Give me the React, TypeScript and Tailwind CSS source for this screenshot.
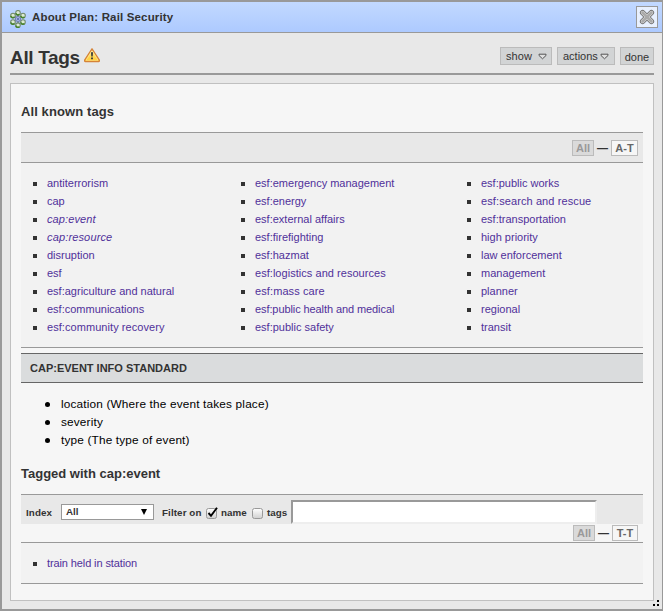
const columns = [
  {
    width: 'w-[208px]',
    tags: ['antiterrorism', 'cap', 'cap:event', 'cap:resource', 'disruption', 'esf', 'esf:agriculture and natural', 'esf:communications', 'esf:community recovery'],
  },
  {
    width: 'w-[226px]',
    tags: ['esf:emergency management', 'esf:energy', 'esf:external affairs', 'esf:firefighting', 'esf:hazmat', 'esf:logistics and resources', 'esf:mass care', 'esf:public health and medical', 'esf:public safety'],
  },
  {
    width: 'w-[160px]',
    tags: ['esf:public works', 'esf:search and rescue', 'esf:transportation', 'high priority', 'law enforcement', 'management', 'planner', 'regional', 'transit'],
  },
];

const infoItems = ['location (Where the event takes place)', 'severity', 'type (The type of event)'];

const tracking: Record<string, string> = {
  'cap:event': 'italic tracking-[0.1px]',
  'cap:resource': 'italic tracking-[0.15px]',
  'esf:community recovery': 'tracking-[0.06px]',
  'esf:public health and medical': 'tracking-[-0.09px]',
  'esf:logistics and resources': 'tracking-[0.04px]',
  'esf:mass care': 'tracking-[0.1px]',
  'esf:search and rescue': 'tracking-[0.1px]',
  'train held in station': 'tracking-[-0.11px]',
};

function TagItem({ name }: { name: string }) {
  return (
    <li className="flex h-[18px] items-center whitespace-nowrap">
      <span className="mt-[1px] mr-[10px] size-1 shrink-0 bg-[#333]" />
      <a className={tracking[name]}>{name}</a>
    </li>
  );
}

function PlanIcon() {
  const petals = [[8, 2.8], [13, 5.5], [13, 12], [8, 15.2], [3, 12], [3, 5.5]];
  return (
    <svg className="mt-[3px] ml-2 h-[18px] w-4 shrink-0" viewBox="0 0 16 18">
      {petals.map(([x, y]) => (
        <g key={`${x}-${y}`}>
          <path d={`M8 9L${x} ${y}`} stroke="#7583a8" strokeWidth="1.6" />
          <circle cx={x} cy={y} r="2.3" fill="#dcebd3" stroke="#728a6c" strokeWidth="1.1" />
          <path d={`M${x - 2.2} ${y + 0.3}a2.2 2.2 0 0 0 3.6 1.3`} fill="none" stroke="#478329" strokeWidth="1.5" />
        </g>
      ))}
      <circle cx="8" cy="9" r="2.6" fill="#a5b4e4" stroke="#7580ae" />
      <circle cx="8" cy="9" r="1" fill="#5263aa" />
    </svg>
  );
}

function WarningIcon() {
  return (
    <svg className="ml-[4px] h-[15px] w-4 shrink-0" viewBox="0 0 16 15">
      <defs>
        <linearGradient id="warn" x1="0" y1="0" x2="0" y2="1">
          <stop offset="0" stopColor="#fff1a0" />
          <stop offset="1" stopColor="#ffc928" />
        </linearGradient>
      </defs>
      <path d="M8 .8L15.4 12.2Q15.6 13.5 14.6 13.5H1.4Q.4 13.5 .6 12.2Z" fill="url(#warn)" stroke="#d58338" strokeWidth="1.3" strokeLinejoin="round" />
      <path d="M8 2.6L14 12.3H2Z" fill="none" stroke="#ffe9a0" strokeWidth=".6" />
      <path d="M7 4.2h2L8.7 8.5H7.3ZM7.1 9.5h1.8v1.8H7.1Z" fill="#34383c" />
    </svg>
  );
}

function Caret() {
  return (
    <svg className="mt-[1px] h-[7px] w-[9px] shrink-0" viewBox="0 0 9 7">
      <path d="M1 1.2h7v1.3L4.5 5.8 1 2.5Z" fill="#e0e0e0" stroke="#555" strokeWidth="1" />
    </svg>
  );
}

function Pager({ range, rangeClass }: { range: string; rangeClass: string }) {
  return (
    <div className="flex h-4 text-[11px] leading-[16px] font-bold">
      <span className="h-4 w-[22px] border border-[#bbb] bg-[#dadada] text-center leading-[15px] text-[#999]">All</span>
      <span className="w-[17px] text-center leading-[16px]">—</span>
      <span className={rangeClass}>{range}</span>
    </div>
  );
}

function CheckBox({ checked }: { checked?: boolean }) {
  return (
    <svg className="mt-[2px] h-[14px] w-3 shrink-0" viewBox="0 0 12 14">
      <defs>
        <linearGradient id="box" x1="0" y1="0" x2="0" y2="1">
          <stop offset="0" stopColor="#fff" />
          <stop offset="1" stopColor="#d0d0d0" />
        </linearGradient>
      </defs>
      <rect x=".5" y="2.5" width="10" height="10" rx="2" fill="url(#box)" stroke="#999" />
      {checked && <path d="M2.5 7L5 9.8L11 1.8" fill="none" stroke="#000" strokeWidth="1.9" />}
    </svg>
  );
}

export default function App() {
  return (
    <div className="relative flex h-[611px] w-[663px] flex-col overflow-hidden border-2 border-r border-[#999] bg-[#e8e8e8] font-['Liberation_Sans',Arial,sans-serif] text-[11px] text-[#333]">
      <header className="flex h-[31px] shrink-0 items-center border-b border-[#999] bg-linear-to-b from-[#c2d9ff] to-[#adcaff]">
        <PlanIcon />
        <h2 className="mt-[1px] ml-[6px] text-[11.5px] leading-[17px] font-bold tracking-[0.16px]">About Plan: Rail Security</h2>
        <button className="mr-[4px] ml-auto flex size-[22px] items-center justify-center border border-[#999] bg-[#e8f0fe]">
          <svg className="size-4 shrink-0" viewBox="0 0 16 16">
            <path d="M3.6 3.6L12.4 12.4M12.4 3.6L3.6 12.4" stroke="#707070" strokeWidth="5.4" strokeLinecap="round" />
            <path d="M3.6 3.6L12.4 12.4M12.4 3.6L3.6 12.4" stroke="#d2d2d2" strokeWidth="3.7" strokeLinecap="round" />
            <path d="M3.6 3.6L12.4 12.4M12.4 3.6L3.6 12.4" stroke="#aaa" strokeWidth="2.5" strokeLinecap="round" />
          </svg>
        </button>
      </header>

      <div className="mx-2 flex h-[42px] shrink-0 border-b-2 border-[#999]">
        <h1 className="w-[70px] pt-[11px] text-[19px] leading-[28px] font-bold tracking-[-0.33px] whitespace-nowrap">All Tags</h1>
        <div className="pt-[15px]"><WarningIcon /></div>
        <div className="mt-[14px] ml-auto flex h-[18px] gap-[5px] text-[11px] leading-[17px]">
          <button className="flex h-[18px] w-[52px] items-center justify-between border border-[#bbb] bg-[#d2d4d5] px-[5px] pr-1 tracking-[0.1px]">show<Caret /></button>
          <button className="flex h-[18px] w-[58px] items-center justify-between border border-[#bbb] bg-[#d2d4d5] px-[5px]">actions<Caret /></button>
          <button className="h-[18px] w-[34px] border border-[#bbb] bg-[#d2d4d5] leading-[18px]">done</button>
        </div>
      </div>

      <main className="mx-2 mt-2 flex h-[518px] shrink-0 flex-col border border-[#c0c0c0] bg-[#f6f6f6] px-[10px]">
        <h3 className="h-[48px] pt-[19px] text-[13px] leading-[18px] font-bold tracking-[0.1px]">All known tags</h3>
        <div className="flex h-[31px] shrink-0 items-center justify-end border-y border-[#999] bg-[#e8e8e8] pr-[5px]">
          <Pager range="A-T" rangeClass="h-4 w-[27px] border border-[#bbb] bg-[#f6f6f6] text-center leading-[15px] text-[#666]" />
        </div>
        <div className="flex h-[185px] shrink-0 border-b border-[#999] bg-[#f2f2f2] pt-[11px] pl-3 text-[#50309a]">
          {columns.map((c) => (
            <ul key={c.width} className={c.width}>
              {c.tags.map((t) => <TagItem key={t} name={t} />)}
            </ul>
          ))}
        </div>
        <h4 className="mt-[5px] h-[30px] shrink-0 border-y border-[#666] bg-[#dadcdd] pl-[9px] text-[11px] leading-[29px] font-bold">CAP:EVENT INFO STANDARD</h4>
        <ul className="h-[73px] pt-[12px] pl-[24px] text-[11.8px] leading-[18px] tracking-[0.17px] text-black">
          {infoItems.map((t) => (
            <li key={t} className="flex h-[18px] items-center">
              <span className="mr-[11px] size-[5px] rounded-full bg-black" />
              {t}
            </li>
          ))}
        </ul>
        <h3 className="h-[38px] pt-[9px] text-[13px] leading-[18px] font-bold">Tagged with cap:event</h3>
        <div className="flex h-[30px] shrink-0 items-center overflow-hidden border-t border-[#999] bg-[#e8e8e8] pl-[5px] text-[9.8px] font-bold">
          <label className="w-[35px] pt-[7px] tracking-[0.1px]">Index</label>
          <button className="mt-[5px] flex h-4 w-[93px] items-center justify-between border border-[#999] bg-white pr-[6px] pl-1 font-bold">
            All
            <svg className="h-[6px] w-[6px]" viewBox="0 0 6 6"><path d="M0 0H6L3 6Z" fill="#000" /></svg>
          </button>
          <span className="ml-2 w-[44px] pt-[7px] tracking-[0.1px] whitespace-nowrap">Filter on</span>
          <div className="pt-[5px]"><CheckBox checked /></div>
          <span className="ml-[3px] w-[31px] pt-[7px]">name</span>
          <div className="pt-[5px]"><CheckBox /></div>
          <span className="ml-[3px] w-[24px] pt-[7px]">tags</span>
          <div className="mt-[5px] h-[24px] w-[306px] border-2 border-t-[#999] border-r-[#eee] border-b-[#eee] border-l-[#999] bg-white" />
        </div>
        <div className="flex h-[19px] shrink-0 items-start justify-end border-b border-[#999] pt-[1px] pr-[5px]">
          <Pager range="T-T" rangeClass="h-4 w-[26px] border border-[#bbb] bg-[#f6f6f6] text-center leading-[15px] text-[#666]" />
        </div>
        <ul className="h-[41px] shrink-0 border-b border-[#999] bg-[#f2f2f2] pt-[11px] pl-3 text-[#50309a]">
          <TagItem name="train held in station" />
        </ul>
      </main>
      <svg className="absolute right-[3px] bottom-[3px] size-[6px]" viewBox="0 0 6 6"><path d="M4 0h2v2H4ZM0 4h2v2H0ZM4 4h2v2H4Z" fill="#000" /></svg>
    </div>
  );
}
